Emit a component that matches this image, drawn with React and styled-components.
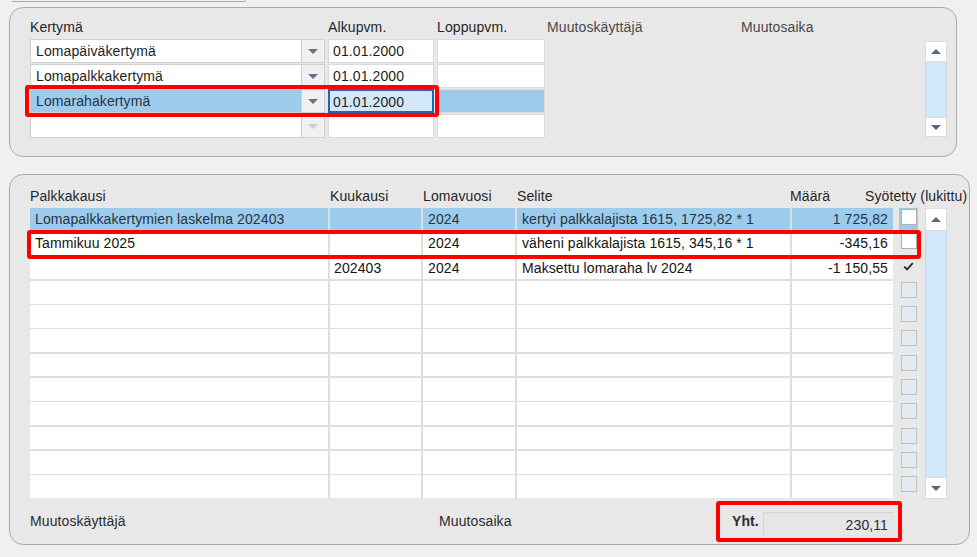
import React from 'react';
import styled, { createGlobalStyle } from 'styled-components';

const GlobalStyle = createGlobalStyle`
  html, body { margin: 0; padding: 0; background: #f0f0f0; }
  body {
    font-family: "Liberation Sans", Arial, sans-serif;
    font-size: 14px;
    letter-spacing: 0.1px;
    color: #1e1e1e;
  }
  * { box-sizing: border-box; }
`;

const SEL = '#9dcbec';

const Page = styled.div`
  position: relative;
  width: 977px;
  height: 557px;
  overflow: hidden;
`;

const TopStub = styled.div`
  margin-left: 12px;
  width: 234px;
  height: 2px;
  border-bottom: 1px solid #a8a8a8;
  border-right: 1px solid #a8a8a8;
  border-radius: 0 0 5px 0;
`;

const Panel = styled.section`
  margin: ${p => p.$top}px 0 0 9px;
  width: ${p => p.$w}px;
  height: ${p => p.$h}px;
  border: 1px solid #a9a9a9;
  border-radius: 14px;
  background: #e8e8e8;
  padding: ${p => p.$pad};
`;

const TopLayout = styled.div`
  display: flex;
  align-items: flex-start;
`;

const TopGrid = styled.div`
  display: grid;
  grid-template-columns: 298px 109px 110px 194px 184px;
  grid-template-rows: 19px repeat(4, 24px);
  row-gap: 1px;
`;

const HeadLabel = styled.div`
  line-height: 17px;
  color: ${p => p.$muted ? '#484848' : '#262626'};
  white-space: nowrap;
  padding-top: ${p => p.$pt || 0}px;
  margin-left: ${p => p.$ml || 0}px;
`;

const Combo = styled.div`
  width: 295px;
  display: flex;
  border: 1px solid #d0d0d0;
  background: ${p => p.$sel ? SEL : '#ffffff'};
`;

const ComboText = styled.div`
  flex: 1;
  padding-left: 5px;
  line-height: 22px;
  color: ${p => p.$sel ? '#253444' : '#1e1e1e'};
  white-space: nowrap;
`;

const DropButton = styled.div`
  width: 23px;
  background: #f0f0f0;
  border-left: 1px solid #cfcfcf;
  display: flex;
  align-items: center;
  justify-content: center;
`;

const DateCell = styled.div`
  width: ${p => p.$w}px;
  background: ${p => p.$focus ? '#d3e8f9' : p.$sel ? SEL : '#ffffff'};
  border: ${p => p.$focus ? '2px solid #1d69b1' : '1px solid #dadada'};
  padding-left: ${p => p.$focus ? 3 : 4}px;
  line-height: ${p => p.$focus ? 21 : 23}px;
  padding-top: ${p => p.$focus ? 1 : 0}px;
  white-space: nowrap;
  color: #1e1e1e;
`;

const Filler = styled.div`
  grid-column: span 2;
`;

const Scrollbar = styled.div`
  margin-left: auto;
  margin-top: ${p => p.$mt}px;
  width: 22px;
  height: ${p => p.$h}px;
  display: flex;
  flex-direction: column;
`;

const ScrollButton = styled.div`
  height: ${p => p.$h}px;
  background: #ffffff;
  border: 1px solid #dcdcdc;
  display: flex;
  align-items: center;
  justify-content: center;
`;

const ScrollTrack = styled.div`
  flex: 1;
  background: #d2e7f9;
  border-left: 1px solid #c6d6e4;
  border-right: 1px solid #c6d6e4;
`;

const Triangle = ({ dir = 'down', color = '#5f6679' }) => (
  <svg width="10" height="5" viewBox="0 0 10 5">
    {dir === 'up'
      ? <polygon points="0,5 10,5 5,0" fill={color} />
      : <polygon points="0,0 10,0 5,5" fill={color} />}
  </svg>
);

const HeadRow = styled.div`
  display: grid;
  grid-template-columns: 298px 91px 92px 273px 73px 1fr;
  column-gap: 2px;
  height: 23px;
`;

const Body = styled.div`
  display: flex;
  align-items: flex-start;
`;

const DataGrid = styled.div`
  display: grid;
  grid-template-columns: 298px 91px 92px 273px 101px;
  grid-auto-rows: 22.7px;
  column-gap: 2px;
  row-gap: 1.6px;
  background: #dedede;
`;

const DataCell = styled.div`
  background: ${p => p.$sel ? SEL : '#ffffff'};
  color: ${p => p.$sel ? '#253444' : '#141414'};
  padding: 0 ${p => p.$right ? 5 : 4}px 0 ${p => p.$pl || 4}px;
  line-height: 22.7px;
  text-align: ${p => p.$right ? 'right' : 'left'};
  white-space: nowrap;
  overflow: hidden;
`;

const CheckCol = styled.div`
  margin-left: 6px;
  width: 19px;
  display: flex;
  flex-direction: column;
  gap: 1.6px;
`;

const CheckCell = styled.div`
  height: 22.7px;
  background: ${p => p.$sel ? SEL : 'transparent'};
  display: flex;
  justify-content: center;
  padding-top: 1px;
`;

const CheckBox = styled.div`
  width: 16px;
  height: 16px;
  border: 1px solid ${p => p.$state === 'off' ? '#c0c0c0' : p.$state === 'checked' ? 'transparent' : '#b0b0b0'};
  background: ${p => p.$state === 'off' ? '#e4eaf1' : p.$state === 'checked' ? 'transparent' : '#ffffff'};
  display: flex;
  align-items: flex-start;
  justify-content: flex-start;
  padding: 3px 0 0 1px;
`;

const Footer = styled.div`
  margin-top: 12px;
  height: 26px;
  display: grid;
  grid-template-columns: 409px 293px 31px 131px;
  align-items: center;
`;

const FootLabel = styled.div`
  line-height: 17px;
  margin-bottom: 6px;
  color: #2c2c2c;
  font-weight: ${p => p.$bold ? 700 : 400};
  white-space: nowrap;
`;

const ValueField = styled.div`
  height: 24px;
  background: #e6e6e6;
  border: 1px solid #d6d6d6;
  border-right-color: #e2e2e2;
  border-bottom-color: #e2e2e2;
  text-align: right;
  padding-right: 5px;
  line-height: 24px;
  color: #2c2c2c;
`;

const Highlight = styled.div`
  position: absolute;
  left: ${p => p.$x}px;
  top: ${p => p.$y}px;
  width: ${p => p.$w}px;
  height: ${p => p.$h}px;
  border: 4px solid #ff0000;
  border-radius: 3px;
  pointer-events: none;
`;

const CheckMark = () => (
  <svg width="11" height="9" viewBox="0 0 11 9">
    <path d="M1.2 4.6 L4 7.4 L9.8 1.2" fill="none" stroke="#2a2a2a" strokeWidth="1.8" />
  </svg>
);

const topRows = [
  { name: 'Lomapäiväkertymä', start: '01.01.2000' },
  { name: 'Lomapalkkakertymä', start: '01.01.2000' },
  { name: 'Lomarahakertymä', start: '01.01.2000', sel: true },
  { name: '', start: '', disabled: true },
];

const dataRows = [
  { p: 'Lomapalkkakertymien laskelma 202403', k: '', v: '2024', s: 'kertyi palkkalajista 1615, 1725,82 * 1', m: '1 725,82', sel: true, cb: 'on' },
  { p: 'Tammikuu 2025', k: '', v: '2024', s: 'väheni palkkalajista 1615, 345,16 * 1', m: '-345,16', cb: 'on' },
  { p: '', k: '202403', v: '2024', s: 'Maksettu lomaraha lv 2024', m: '-1 150,55', cb: 'checked' },
  ...Array.from({ length: 9 }, () => ({ p: '', k: '', v: '', s: '', m: '', cb: 'off' })),
];

export default function App() {
  return (
    <Page>
      <GlobalStyle />
      <TopStub />

      <Panel $top={5} $w={948} $h={150} $pad="11px 9px 0 20px">
        <TopLayout>
          <TopGrid>
            <HeadLabel>Kertymä</HeadLabel>
            <HeadLabel>Alkupvm.</HeadLabel>
            <HeadLabel>Loppupvm.</HeadLabel>
            <HeadLabel $muted>Muutoskäyttäjä</HeadLabel>
            <HeadLabel $muted>Muutosaika</HeadLabel>
            {topRows.map((r, i) => (
              <React.Fragment key={i}>
                <Combo $sel={r.sel}>
                  <ComboText $sel={r.sel}>{r.name}</ComboText>
                  <DropButton>
                    <Triangle color={r.disabled ? '#c9ccd2' : '#6b7184'} />
                  </DropButton>
                </Combo>
                <DateCell $w={106} $focus={r.sel}>{r.start}</DateCell>
                <DateCell $w={108} $sel={r.sel} />
                <Filler />
              </React.Fragment>
            ))}
          </TopGrid>
          <Scrollbar $mt={22} $h={96}>
            <ScrollButton $h={21}><Triangle dir="up" /></ScrollButton>
            <ScrollTrack />
            <ScrollButton $h={20}><Triangle /></ScrollButton>
          </Scrollbar>
        </TopLayout>
      </Panel>

      <Panel $top={17} $w={961} $h={371} $pad="10px 22px 0 20px">
        <HeadRow>
          <HeadLabel $pt={3}>Palkkakausi</HeadLabel>
          <HeadLabel $pt={3}>Kuukausi</HeadLabel>
          <HeadLabel $pt={3}>Lomavuosi</HeadLabel>
          <HeadLabel $pt={3}>Selite</HeadLabel>
          <HeadLabel $pt={3} $ml={-2}>Määrä</HeadLabel>
          <HeadLabel $pt={3} $ml={-2}>Syötetty (lukittu)</HeadLabel>
        </HeadRow>
        <Body>
          <DataGrid>
            {dataRows.map((r, i) => (
              <React.Fragment key={i}>
                <DataCell $sel={r.sel} $pl={5}>{r.p}</DataCell>
                <DataCell $sel={r.sel} $pl={4}>{r.k}</DataCell>
                <DataCell $sel={r.sel} $pl={5}>{r.v}</DataCell>
                <DataCell $sel={r.sel} $pl={5}>{r.s}</DataCell>
                <DataCell $sel={r.sel} $right>{r.m}</DataCell>
              </React.Fragment>
            ))}
          </DataGrid>
          <CheckCol>
            {dataRows.map((r, i) => (
              <CheckCell key={i} $sel={r.sel}>
                <CheckBox $state={r.cb}>{r.cb === 'checked' && <CheckMark />}</CheckBox>
              </CheckCell>
            ))}
          </CheckCol>
          <Scrollbar $mt={0} $h={291}>
            <ScrollButton $h={23}><Triangle dir="up" /></ScrollButton>
            <ScrollTrack />
            <ScrollButton $h={22}><Triangle /></ScrollButton>
          </Scrollbar>
        </Body>
        <Footer>
          <FootLabel>Muutoskäyttäjä</FootLabel>
          <FootLabel>Muutosaika</FootLabel>
          <FootLabel $bold>Yht.</FootLabel>
          <ValueField>230,11</ValueField>
        </Footer>
      </Panel>

      <Highlight $x={25} $y={85} $w={414} $h={32} />
      <Highlight $x={27} $y={230} $w={894} $h={29} />
      <Highlight $x={716} $y={501} $w={186} $h={41} />
    </Page>
  );
}
